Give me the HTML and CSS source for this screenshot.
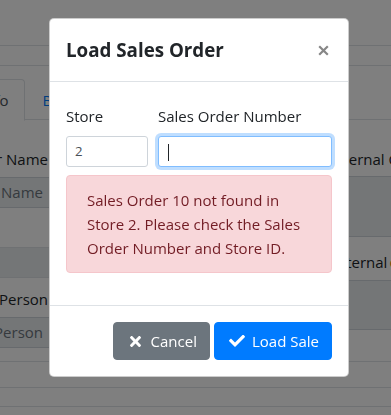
FILE: index.html
```html
<!DOCTYPE html>
<html lang="en">
<head>
<meta charset="utf-8">
<title>Load Sales Order</title>
<link rel="stylesheet" href="styles.css">
</head>
<body>
<div class="page">
  <div class="topbar"></div>
  <div class="subbar"></div>
  <div class="tabs">
    <div class="tab active">Info</div>
    <div class="tab link">Billing</div>
  </div>
  <div class="content">
    <div class="col col-left">
      <div class="lbl">Customer Name</div>
      <div class="fake-input">Customer Name</div>
      <div class="band"></div>
      <div class="lbl lbl-2">Sales Person</div>
      <div class="fake-input">Sales Person</div>
    </div>
    <div class="col col-mid"></div>
    <div class="col col-right">
      <div class="lbl">Internal Comments</div>
      <div class="fake-area"></div>
      <div class="lbl lbl-3">External <span class="req">&#9679;</span></div>
      <div class="fake-area short"></div>
    </div>
  </div>
  <div class="rule r1"></div>
  <div class="rule r2"></div>
  <div class="rule r3"></div>
</div>

<div class="overlay">
  <div class="modal">
    <div class="modal-header">
      <h5 class="modal-title">Load Sales Order</h5>
      <button class="close" type="button" aria-label="Close">
        <svg width="11" height="11" viewBox="0 0 11 11"><path d="M1.2 1.2 L9.8 9.8 M9.8 1.2 L1.2 9.8" stroke="#878787" stroke-width="2.2" stroke-linecap="butt"/></svg>
      </button>
    </div>
    <div class="modal-body">
      <div class="form-row">
        <div class="field field-store">
          <label class="field-label">Store</label>
          <div class="input">2</div>
        </div>
        <div class="field field-order">
          <label class="field-label">Sales Order Number</label>
          <div class="input focused"><span class="caret"></span></div>
        </div>
      </div>
      <div class="alert">Sales Order 10 not found in<br>Store 2. Please check the Sales<br>Order Number and Store ID.</div>
    </div>
    <div class="modal-footer">
      <button class="btn btn-secondary" type="button">
        <span class="icon"><svg width="11" height="11" viewBox="0 80 352 352"><path fill="#fff" d="M242.72 256l100.07-100.07c12.28-12.28 12.28-32.19 0-44.48l-22.24-22.24c-12.28-12.280-32.19-12.28-44.48 0L176 189.28 75.93 89.21c-12.28-12.28-32.19-12.28-44.48 0L9.21 111.45c-12.28 12.28-12.28 32.19 0 44.48L109.28 256 9.21 356.07c-12.28 12.28-12.28 32.19 0 44.48l22.24 22.24c12.28 12.28 32.2 12.28 44.48 0L176 322.72l100.07 100.07c12.28 12.28 32.2 12.28 44.48 0l22.24-22.24c12.28-12.28 12.28-32.19 0-44.48L242.72 256z"/></svg></span>
        <span>Cancel</span>
      </button>
      <button class="btn btn-primary" type="button">
        <span class="icon"><svg width="16" height="11.5" viewBox="0 72 512 368"><path fill="#fff" d="M173.898 439.404l-166.4-166.4c-9.997-9.997-9.997-26.206 0-36.204l36.203-36.204c9.997-9.998 26.207-9.998 36.204 0L192 312.69 432.095 72.596c9.997-9.997 26.207-9.997 36.204 0l36.203 36.204c9.997 9.997 9.997 26.206 0 36.204l-294.4 294.401c-9.998 9.997-26.207 9.997-36.204-.001z"/></svg></span>
        <span>Load Sale</span>
      </button>
    </div>
  </div>
</div>
</body>
</html>
```

FILE: styles.css
```css
* { box-sizing: border-box; }

html, body {
  margin: 0;
  padding: 0;
}

body {
  font-family: "Open Sans", "Noto Sans", "DejaVu Sans", sans-serif;
  color: #212529;
  background: #fff;
}

/* ---------- background page ---------- */
.page {
  width: 391px;
  height: 415px;
  overflow: hidden;
  background: #fff;
  font-size: 15px;
  line-height: 24px;
}

.topbar {
  height: 46px;
  border-bottom: 1px solid #dee2e6;
}

.subbar {
  height: 20px;
  border-bottom: 1px solid #dee2e6;
}

.tabs {
  display: flex;
  margin-top: 13px;
  margin-left: -36px;
  border-bottom: 1px solid #dee2e6;
  height: 41px;
  padding-left: 0;
}

.tab {
  padding: 8px 16px;
  height: 42px;
  border: 1px solid transparent;
  border-top-left-radius: 4px;
  border-top-right-radius: 4px;
  white-space: nowrap;
  line-height: 24px;
}

.tab.active {
  background: #fff;
  border-color: #dee2e6 #dee2e6 #fff;
  color: #495057;
}

.tab.link {
  color: #007bff;
}

.content {
  display: grid;
  grid-template-columns: 50px 280px 1fr;
  height: 227px;
}

.col {
  display: flex;
  flex-direction: column;
  min-width: 0;
}

.col-left {
  align-items: stretch;
}

.lbl {
  display: flex;
  height: 24px;
  margin-top: 27px;
  white-space: nowrap;
}

.col-left .lbl {
  justify-content: flex-end;
  padding-right: 2px;
}

.lbl-2 {
  margin-top: 9px;
}

.lbl-3 {
  margin-top: 13px;
}

.fake-input {
  display: flex;
  justify-content: flex-end;
  height: 31px;
  margin-top: 6px;
  padding-right: 7px;
  background: #e9ecef;
  border-top: 1px solid #ced4da;
  border-bottom: 1px solid #ced4da;
  color: #6c757d;
  white-space: nowrap;
  line-height: 29px;
}

.band {
  height: 31px;
  margin-top: 39px;
  background: #e9ecef;
  border-top: 1px solid #dee2e6;
  border-bottom: 1px solid #dee2e6;
}

.col-right {
  white-space: nowrap;
}

.col-right .lbl {
  justify-content: flex-start;
}

.fake-area {
  height: 61px;
  margin-top: 5px;
  background: #e9ecef;
  border-top: 1px solid #ced4da;
  border-bottom: 1px solid #ced4da;
}

.fake-area.short {
  height: 50px;
  margin-top: 6px;
}

.req {
  color: #fd7e14;
  font-size: 13px;
  margin-left: 2px;
}

.rule {
  border-top: 1px solid #dee2e6;
}

.r1 { margin-top: 14px; height: 26px; }
.r2 { height: 19px; }
.r3 { height: 20px; }

/* ---------- modal ---------- */
.overlay {
  position: fixed;
  inset: 0;
  background: rgba(0, 0, 0, 0.5);
  display: flex;
  align-items: flex-start;
  padding: 18px 0 0 49px;
}

.modal {
  width: 300px;
  background: #fff;
  border: 1px solid rgba(0, 0, 0, 0.2);
  border-radius: 5px;
  overflow: hidden;
}

.modal-header {
  display: flex;
  align-items: center;
  justify-content: space-between;
  padding: 16px;
  border-bottom: 1px solid #dee2e6;
  height: 63px;
}

.modal-title {
  margin: 0;
  font-size: 18.75px;
  font-weight: 700;
  line-height: 30px;
  color: #212529;
}

.close {
  display: flex;
  align-items: center;
  justify-content: center;
  padding: 0;
  margin: 0 3px 0 0;
  border: 0;
  background: transparent;
  width: 11px;
  height: 11px;
}

.close svg {
  display: block;
}

.modal-body {
  padding: 16px;
}

.form-row {
  display: flex;
  gap: 10px;
  margin-top: 6px;
}

.field {
  display: flex;
  flex-direction: column;
}

.field-store {
  width: 82px;
}

.field-order {
  flex: 1;
}

.field-label {
  font-size: 15px;
  line-height: 24px;
  margin-bottom: 8px;
  color: #212529;
}

.input {
  position: relative;
  height: 31px;
  padding: 4px 8px;
  border: 1px solid #ced4da;
  border-radius: 3px;
  font-size: 13.2px;
  line-height: 21px;
  color: #495057;
  background: #fff;
}

.input.focused {
  border-color: #80bdff;
  box-shadow: 0 0 0 3px rgba(0, 123, 255, 0.25);
}

.caret {
  position: absolute;
  left: 9px;
  top: 7px;
  width: 1px;
  height: 17px;
  background: #212529;
}

.alert {
  margin-top: 8px;
  margin-bottom: 16px;
  padding: 12px 20px;
  background: #f8d7da;
  border: 1px solid #f5c6cb;
  border-radius: 4px;
  color: #721c24;
  font-size: 15px;
  line-height: 24px;
  white-space: nowrap;
}

.modal-footer {
  display: flex;
  justify-content: flex-end;
  gap: 4px;
  padding: 16px;
  border-top: 1px solid #dee2e6;
}

.btn {
  display: inline-flex;
  align-items: center;
  height: 38px;
  padding: 6px 12px;
  border: 1px solid transparent;
  border-radius: 4px;
  color: #fff;
  font-family: inherit;
  font-size: 15px;
  line-height: 24px;
  cursor: pointer;
}

.btn .icon {
  display: inline-flex;
  justify-content: center;
  align-items: center;
  width: 20px;
  margin-right: 5px;
}

.btn .icon svg {
  display: block;
}

.btn-secondary {
  background: #6c757d;
  border-color: #6c757d;
}

.btn-primary {
  background: #007bff;
  border-color: #007bff;
}
```
